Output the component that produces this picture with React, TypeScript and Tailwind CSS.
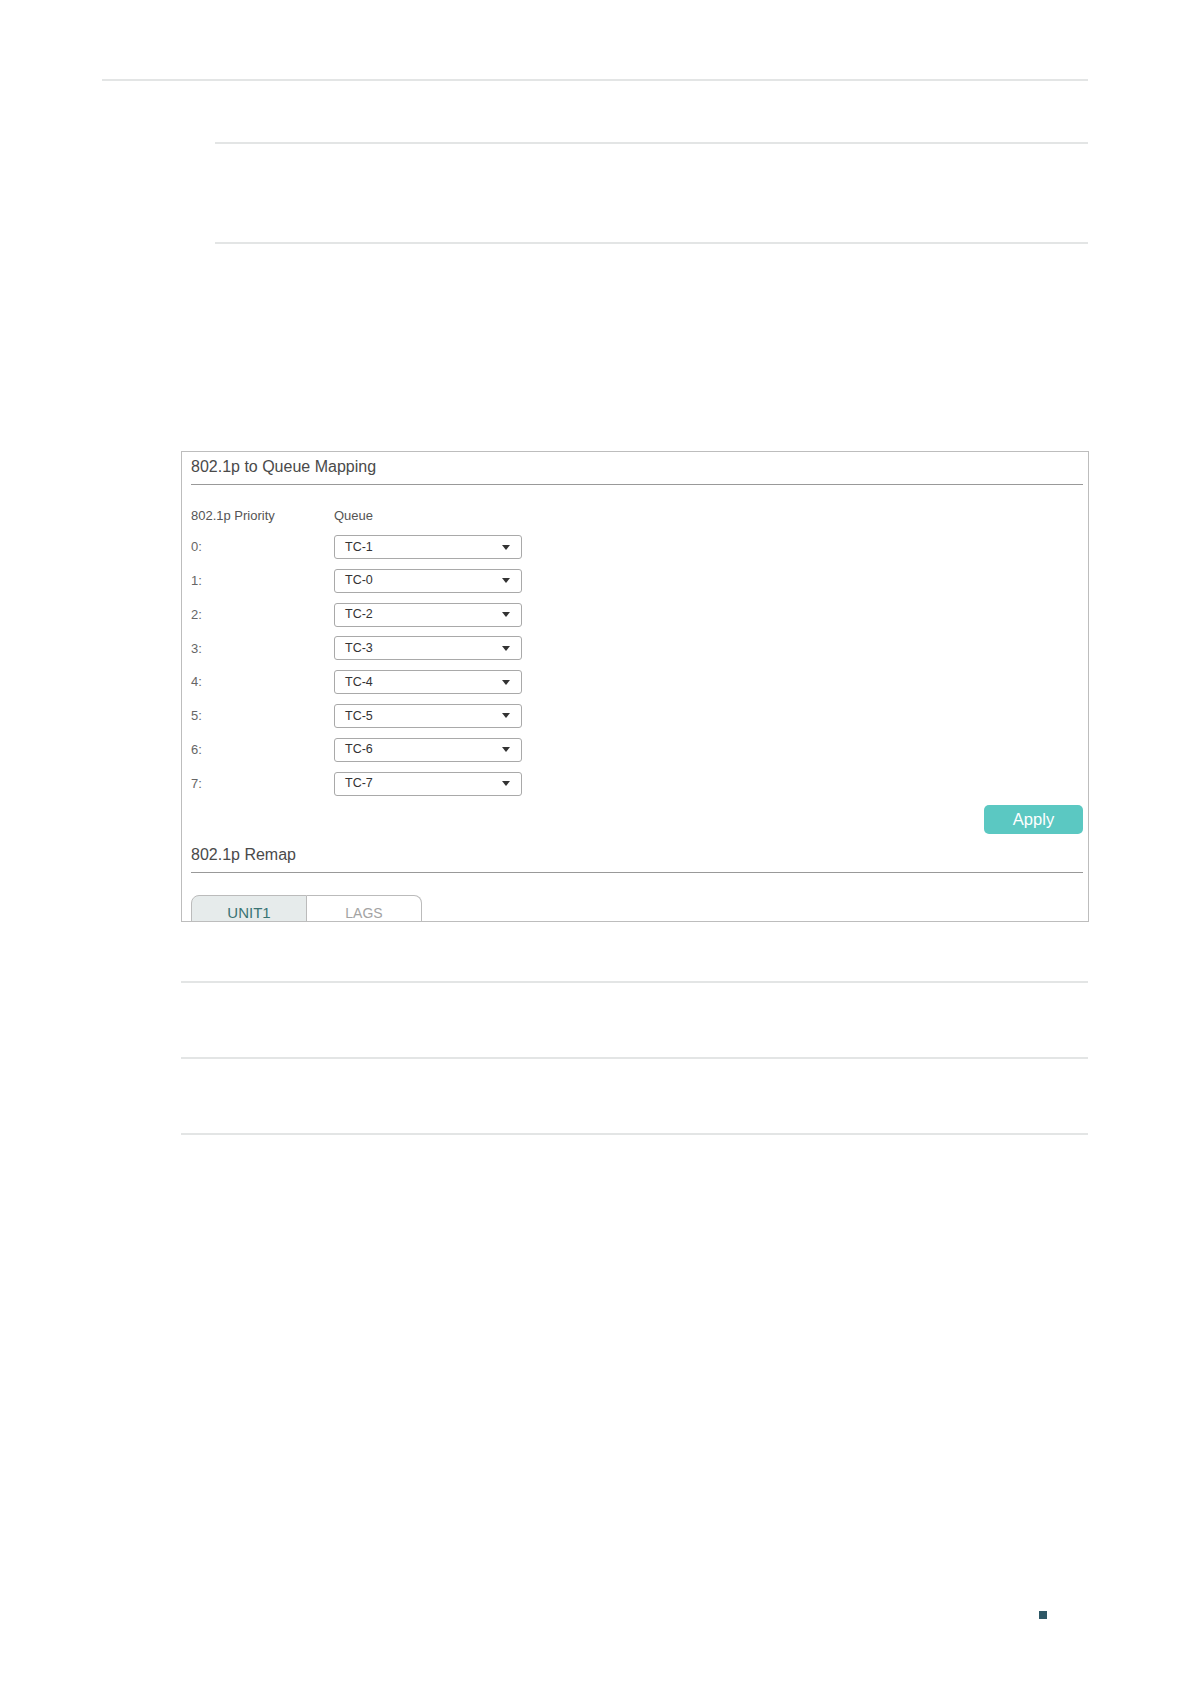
import React from 'react';

const rows = [
  { p: '0:', q: 'TC-1' },
  { p: '1:', q: 'TC-0' },
  { p: '2:', q: 'TC-2' },
  { p: '3:', q: 'TC-3' },
  { p: '4:', q: 'TC-4' },
  { p: '5:', q: 'TC-5' },
  { p: '6:', q: 'TC-6' },
  { p: '7:', q: 'TC-7' },
];

const Select: React.FC<{ value: string }> = ({ value }) => (
  <div className="w-[188px] h-[24px] border border-[#a9a9a9] rounded-[3px] bg-white flex items-center justify-between pl-[10px] pr-[11px]">
    <span className="text-[12.5px] text-[#333]">{value}</span>
    <svg width="8" height="5" viewBox="0 0 8 5">
      <path d="M0 0h8L4 5z" fill="#333" />
    </svg>
  </div>
);

const Rule: React.FC<{ className: string }> = ({ className }) => (
  <div className={`h-[2px] bg-[#e3e5e5] ${className}`} />
);

export default function App() {
  return (
    <div
      className="w-[1191px] min-h-[1684px] bg-white relative"
      style={{ fontFamily: '"Liberation Sans", Arial, sans-serif' }}
    >
      <div className="pt-[79px]">
        <Rule className="ml-[102px] w-[986px]" />
        <Rule className="ml-[215px] w-[873px] mt-[61px]" />
        <Rule className="ml-[215px] w-[873px] mt-[98px]" />
      </div>

      {/* screenshot panel */}
      <div className="ml-[181px] mt-[207px] w-[908px] h-[471px] border border-[#bdbdbd] overflow-hidden">
        <div className="pl-[9px] pr-[5px] pt-[5px]">
          <div className="text-[16px] leading-[20px] text-[#4a4a4a]">802.1p to Queue Mapping</div>
          <div className="mt-[7px] h-px bg-[#999]" />

          <div className="mt-[23px] flex text-[13px] leading-[16px] text-[#555]">
            <div className="w-[143px]">802.1p Priority</div>
            <div>Queue</div>
          </div>

          <div className="mt-[11px] flex flex-col gap-[9.8px]">
            {rows.map((r) => (
              <div key={r.p} className="flex items-center h-[24px]">
                <div className="w-[143px] text-[13px] text-[#666]">{r.p}</div>
                <Select value={r.q} />
              </div>
            ))}
          </div>

          <div className="flex justify-end mt-[9px]">
            <button className="w-[99px] h-[29px] rounded-[5px] bg-[#5bc8c2] text-white text-[16.5px] leading-none">
              Apply
            </button>
          </div>

          <div className="mt-[11px] text-[16px] leading-[20px] text-[#4a4a4a]">802.1p Remap</div>
          <div className="mt-[7px] h-px bg-[#999]" />

          <div className="mt-[22px] flex">
            <div className="w-[116px] h-[38px] border border-[#bbb] rounded-tl-[8px] bg-[#e6ebeb] flex items-center justify-center text-[15px] text-[#3a7474]">
              UNIT1
            </div>
            <div className="w-[115px] h-[38px] border border-l-0 border-[#bbb] rounded-tr-[8px] bg-white flex items-center justify-center text-[14px] text-[#a3a3a3]">
              LAGS
            </div>
          </div>
        </div>
      </div>

      <div>
        <Rule className="ml-[181px] w-[907px] mt-[59px]" />
        <Rule className="ml-[181px] w-[907px] mt-[74px]" />
        <Rule className="ml-[181px] w-[907px] mt-[74px]" />
      </div>

      <div className="ml-[1039px] mt-[476px] w-[8px] h-[8px] bg-[#2e5866]" />
    </div>
  );
}
